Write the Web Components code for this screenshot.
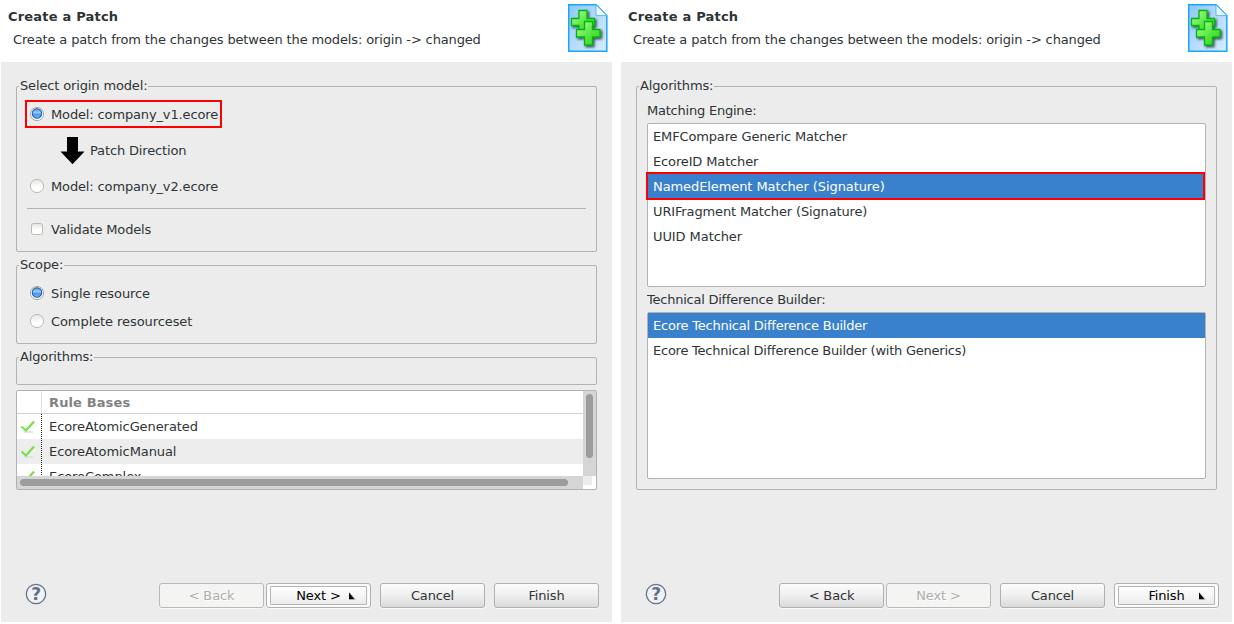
<!DOCTYPE html>
<html lang="en">
<head>
<meta charset="utf-8">
<title>Create a Patch</title>
<style>
html,body{margin:0;height:100%;background:#fff;overflow:hidden}
body{display:flex;gap:9px;padding-left:1px;box-sizing:border-box;font:13px/16px "DejaVu Sans",sans-serif;letter-spacing:-.14px;color:#2e3436}
</style>
</head>
<body>
<wizard-page heading="Create a Patch" description="Create a patch from the changes between the models: origin -&gt; changed">
  <group-box label="Select origin model:" style="height:166px">
    <toggle-item type="radio" checked marked>Model: company_v1.ecore</toggle-item>
    <patch-direction>Patch Direction</patch-direction>
    <toggle-item type="radio">Model: company_v2.ecore</toggle-item>
    <line-separator></line-separator>
    <toggle-item type="check">Validate Models</toggle-item>
  </group-box>
  <group-box label="Scope:" style="height:79px">
    <toggle-item type="radio" checked style="letter-spacing:-.09px">Single resource</toggle-item>
    <toggle-item type="radio" style="letter-spacing:-.08px">Complete resourceset</toggle-item>
  </group-box>
  <group-box label="Algorithms:" style="height:28px"></group-box>
  <rule-table></rule-table>
  <push-button slot="buttons" disabled>&lt; Back</push-button>
  <push-button slot="buttons" default>Next &gt;</push-button>
  <push-button slot="buttons">Cancel</push-button>
  <push-button slot="buttons">Finish</push-button>
</wizard-page>
<wizard-page heading="Create a Patch" description="Create a patch from the changes between the models: origin -&gt; changed">
  <group-box label="Algorithms:" style="height:404px">
    <list-field label="Matching Engine:" style="--h:164px;padding-top:3px;--ls:-.22px">
      <list-item>EMFCompare Generic Matcher</list-item>
      <list-item>EcoreID Matcher</list-item>
      <list-item selected marked style="letter-spacing:-.09px">NamedElement Matcher (Signature)</list-item>
      <list-item>URIFragment Matcher (Signature)</list-item>
      <list-item style="letter-spacing:-.08px">UUID Matcher</list-item>
    </list-field>
    <list-field label="Technical Difference Builder:" style="--h:167px;--ls:-.24px">
      <list-item selected style="letter-spacing:-.22px">Ecore Technical Difference Builder</list-item>
      <list-item style="letter-spacing:-.235px">Ecore Technical Difference Builder (with Generics)</list-item>
    </list-field>
  </group-box>
  <push-button slot="buttons">&lt; Back</push-button>
  <push-button slot="buttons" disabled>Next &gt;</push-button>
  <push-button slot="buttons">Cancel</push-button>
  <push-button slot="buttons" default style="--arrow:76px">Finish</push-button>
</wizard-page>
<script>
function define(name, render) {
  customElements.define(name, class extends HTMLElement {
    connectedCallback() {
      if (this.shadowRoot) return;
      this.attachShadow({mode: 'open'}).innerHTML = render(this);
    }
  });
}

define('patch-icon', () => `
<style>:host{display:block;width:40px;height:48px}svg{display:block}</style>
<svg width="40" height="48" viewBox="0 0 40 48">
  <defs>
    <linearGradient id="p" x1="0" y1="0" x2="1" y2="1"><stop offset="0" stop-color="#8cc8fa"/><stop offset=".5" stop-color="#b5dcfb"/><stop offset="1" stop-color="#d6ecfe"/></linearGradient>
    <linearGradient id="g" x1="0" y1="0" x2="1" y2="1"><stop offset="0" stop-color="#b4fba0"/><stop offset=".55" stop-color="#55e63f"/><stop offset="1" stop-color="#30d020"/></linearGradient>
    <filter id="s" x="-30%" y="-30%" width="170%" height="170%"><feDropShadow dx="1.5" dy="1.5" stdDeviation="1.2" flood-color="#123" flood-opacity=".8"/></filter>
  </defs>
  <path d="M.7.7H28L38.8 11.5V47.3H.7Z" fill="url(#p)" stroke="#18a5ff" stroke-width="1.5"/>
  <path d="M28 .8V11.6H38.8Z" fill="#eef7ff" stroke="#35adff" stroke-width=".8"/>
  <g fill="url(#g)" stroke="#04b60a" stroke-width="1.3" filter="url(#s)">
    <path d="M11 6.5h8v8h7.5v7H19v8h-8v-8H3.500v-7H11z"/>
    <path d="M16.500 17.500h8v8h7.500v7.500h-7.500v8h-8v-8H8.500v-7.500h8z"/>
  </g>
</svg>`);

define('help-button', () => `
<style>:host{display:block;width:22px;height:22px}svg{display:block}text{font:bold 17px "DejaVu Sans",sans-serif}</style>
<svg width="22" height="22"><circle cx="11" cy="11" r="9.700" fill="#f1f2f4" stroke="#64748f" stroke-width="1.300"/><text x="11" y="17.200" text-anchor="middle" fill="#62718c">?</text></svg>`);

define('wizard-page', el => `
<style>
:host{display:flex;flex-direction:column;width:611px;height:622px;flex:none}
header{height:62px;display:flex;justify-content:space-between;box-sizing:border-box;padding:4px 4px 0 7px}
.titles{padding-top:5px}
h1{font:bold 13px/16px "DejaVu Sans",sans-serif;letter-spacing:.2px;margin:0}
p{margin:7px 0 0 5px;white-space:nowrap}
main{flex:1;background:#ececec;padding:24px 15px 0;display:flex;flex-direction:column;gap:13px}
footer{background:#ececec;height:39px;display:flex;align-items:flex-start;padding-right:13px;flex:none}
help-button{margin:0 auto 0 24px}
</style>
<header><div class="titles"><h1>${el.getAttribute('heading')}</h1><p>${el.getAttribute('description').replace('>', '&gt;')}</p></div><patch-icon></patch-icon></header>
<main><slot></slot></main>
<footer><help-button></help-button><slot name="buttons"></slot></footer>`);

define('group-box', el => `
<style>
:host{display:block;box-sizing:border-box;border:1px solid #b2b2b2;border-radius:2px;flex:none}
.label{display:block;width:max-content;background:#ececec;margin:-9px 0 6px 2px;padding:0 1px;height:16px}
</style>
<span class="label">${el.getAttribute('label')}</span><slot></slot>`);

define('toggle-item', el => {
  const on = el.hasAttribute('checked');
  const glyph = el.getAttribute('type') === 'radio'
    ? `<circle cx="8" cy="8" r="6.600" fill="url(#f)" stroke="${on ? '#a5aa9f' : '#b9bcb3'}"/>` +
      (on ? '<circle cx="8" cy="7.500" r="4.700" fill="url(#b)" stroke="#2462ad" stroke-width="1.100"/>' : '')
    : '<rect x="2.500" y="2.500" width="11" height="11" rx="2" fill="url(#f)" stroke="#b9bcb3"/>';
  return `
<style>
:host{display:flex;align-items:center;box-sizing:border-box;width:max-content;height:28px;margin-left:8px;padding:0 2px;border:2px solid transparent}
:host([marked]){border-color:#f00}
svg{margin:-1px 6px 0 0}
span{padding-top:2px}
</style>
<svg width="16" height="16"><defs>
<linearGradient id="f" x1="0" y1="0" x2="0" y2="1"><stop stop-color="#e4e5e0"/><stop offset=".6" stop-color="#fff"/><stop offset="1" stop-color="#fff"/></linearGradient>
<linearGradient id="b" x1="0" y1="0" x2="0" y2="1"><stop stop-color="#4b91e0"/><stop offset=".4" stop-color="#9ccafa"/><stop offset=".6" stop-color="#4c9cf2"/><stop offset="1" stop-color="#70b5ff"/></linearGradient></defs>${glyph}</svg><span><slot></slot></span>`;
});

define('patch-direction', () => `
<style>:host{display:flex;align-items:center;box-sizing:border-box;height:44px;padding-top:2px;margin-left:43px;gap:5px}</style>
<svg width="25" height="28"><path d="M7 0h11v14.500H24.500L12.500 27.300.5 14.500H7z" fill="#000"/></svg><slot></slot>`);

define('line-separator', () => `
<style>:host{display:block;height:1px;background:#b2b2b2;margin:8px 10px 6px}</style>`);

define('list-field', el => `
<style>
:host{display:block;margin:0 10px 5px}
.label{display:block;height:20px;letter-spacing:var(--ls)}
.list{height:var(--h);box-sizing:border-box;border:1px solid #b2b2b2;border-radius:2px;background:#fff}
</style>
<span class="label">${el.getAttribute('label')}</span><div class="list"><slot></slot></div>`);

define('list-item', () => `
<style>
:host{display:block;height:25px;line-height:25px;padding-left:5px}
:host([selected]){background:#3981cd;color:#fff}
:host([marked]){box-sizing:border-box;height:28px;line-height:25px;margin:-2px 0 -1px -2px;border:2px solid #f00;padding-left:5px}
</style><slot></slot>`);

define('rule-table', () => {
  const row = t => `<div class="row"><span class="mark"><svg width="16" height="16"><path d="M4 14h9" stroke="#ddd" stroke-width="1.500"/><path d="M1.500 8.500l4.500 4L14 3.500" fill="none" stroke="#77e24b" stroke-width="2.300"/></svg></span><span>${t}</span></div>`;
  return `
<style>
:host{display:grid;grid-template:85px 13px/1fr 13px;box-sizing:border-box;height:100px;margin-top:-8px;border:1px solid #b2b2b2;border-radius:2px;background:#fff;flex:none;letter-spacing:-.08px}
.view{overflow:hidden}
.head{display:flex;height:22px;border-bottom:1px solid #d0d0d0;font-weight:bold;color:#828282;line-height:23px;letter-spacing:.12px}
.head i{width:24px;border-right:1px solid #e2e2e2;margin-right:7px}
.row{display:flex;height:25px;line-height:25px}
.row:nth-child(odd){background:#ededed}
.mark{box-sizing:border-box;width:25px;margin-right:7px;padding:4px 0 0 3px;background:repeating-linear-gradient(#222 0 1px,transparent 1px 2px) right/1px 100% no-repeat}
.row:nth-child(odd) .mark{background-image:repeating-linear-gradient(transparent 0 1px,#222 1px 2px)}
svg{display:block}
.v,.h{box-sizing:border-box;background:#d5d5d5;padding:3px}
.v b,.h b{display:block;background:#9b9c9d;border-radius:4px}
.v b{width:7px;height:64px}
.h b{width:548px;height:7px}
.corner{background:#ececec;margin:0 4px 4px 0}
</style>
<div class="view"><div class="head"><i></i>Rule Bases</div>${row('EcoreAtomicGenerated')}${row('EcoreAtomicManual')}${row('EcoreComplex')}</div>
<div class="v"><b></b></div><div class="h"><b></b></div><div class="corner"></div>`;
});

define('push-button', el => `
<style>
:host{display:flex;box-sizing:border-box;width:105px;height:25px;margin-left:9px;border:1px solid #b0b0b0;border-radius:3px;background:linear-gradient(#fcfcfc,#efefef 50%,#dadada);box-shadow:0 1px #f7f7f7}
:host(:nth-of-type(2)){margin-left:2px}
.face{flex:1;display:flex;align-items:center;justify-content:center;position:relative}
:host([disabled]){background:#f4f4f2;color:#adafae;text-shadow:1px 1px #fff;border-color:#b9b9b9}
:host([default]){color:#000;background:#fbfbfb}
:host([default]) .face{margin:2px 3px;border:1px solid #b4b4b4;background:linear-gradient(#fff,#f4f4f4 55%,#ececec);border-radius:1px}
svg{position:absolute;right:auto;left:calc(var(--arrow,74px) + 3px);top:5px}
</style>
<div class="face"><slot></slot>${el.hasAttribute('default') ? '<svg width="9" height="8"><path d="M1 0L8.500 7.500H1z" fill="#c8c8c8"/><path d="M1 .5L6.500 7.200H1z" fill="#000"/></svg>' : ''}</div>`);
</script>
</body>
</html>
